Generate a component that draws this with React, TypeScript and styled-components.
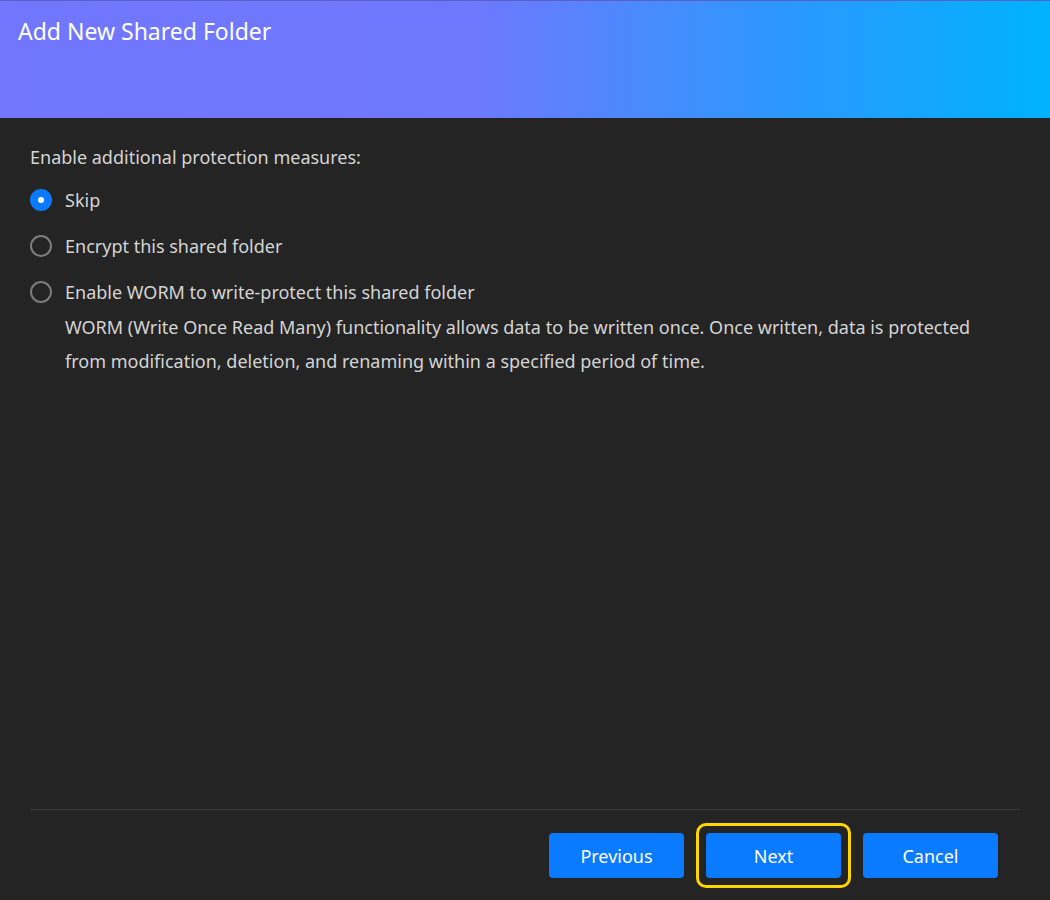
import styled, { createGlobalStyle } from "styled-components";

const GlobalStyle = createGlobalStyle`
  html, body {
    margin: 0;
    padding: 0;
    background: #242424;
  }
  * {
    box-sizing: border-box;
  }
`;

const Dialog = styled.div`
  width: 1050px;
  height: 900px;
  display: flex;
  flex-direction: column;
  background: #242424;
  font-family: "Noto Sans", "Open Sans", sans-serif;
  color: #d4d4d4;
`;

const Header = styled.header`
  height: 118px;
  flex-shrink: 0;
  padding: 14px 18px;
  border-top: 1px solid #5a5fc8;
  background: linear-gradient(90deg, #7276ff 0%, #6e78ff 45%, #2b98ff 75%, #00b2ff 100%);

  h1 {
    margin: 0;
    font-size: 23px;
    line-height: 32px;
    font-weight: 400;
    color: #ffffff;
  }
`;

const Body = styled.main`
  flex: 1;
  padding: 25px 40px 0 30px;
`;

const Prompt = styled.p`
  margin: 0 0 15px;
  font-size: 18px;
  line-height: 28px;
`;

const OptionList = styled.div`
  display: flex;
  flex-direction: column;
  gap: 18px;
`;

const Option = styled.label`
  display: flex;
  align-items: flex-start;
  gap: 13px;
  cursor: pointer;
`;

const Radio = styled.span<{ checked?: boolean }>`
  width: 22px;
  height: 22px;
  margin-top: 3px;
  flex-shrink: 0;
  border-radius: 50%;
  display: flex;
  align-items: center;
  justify-content: center;
  background: ${(props) => (props.checked ? "#0a7bff" : "transparent")};
  border: ${(props) => (props.checked ? "none" : "2px solid #7c7c7c")};

  &::after {
    content: "";
    display: ${(props) => (props.checked ? "block" : "none")};
    width: 6px;
    height: 6px;
    border-radius: 50%;
    background: #ffffff;
  }
`;

const OptionText = styled.div`
  font-size: 18px;
  line-height: 28px;

  p {
    margin: 4px 0 0;
    line-height: 34px;
  }
`;

const Footer = styled.footer`
  height: 91px;
  margin: 0 30px;
  border-top: 1px solid #3a3a3a;
  display: flex;
  justify-content: flex-end;
  align-items: flex-start;
  padding: 23px 22px 0 0;
  gap: 22px;
`;

const ButtonWrap = styled.div<{ focused?: boolean }>`
  padding: 7px;
  margin: -10px;
  border-radius: 10px;
  border: 3px solid ${(props) => (props.focused ? "#ffd500" : "transparent")};
`;

const Button = styled.button`
  width: 135px;
  height: 45px;
  border: none;
  border-radius: 4px;
  background: #0a7aff;
  color: #ffffff;
  font-family: inherit;
  font-size: 18px;
  cursor: pointer;
`;

export default function App() {
  return (
    <>
      <GlobalStyle />
      <Dialog>
        <Header>
          <h1>Add New Shared Folder</h1>
        </Header>
        <Body>
          <Prompt>Enable additional protection measures:</Prompt>
          <OptionList>
            <Option>
              <Radio checked />
              <OptionText>Skip</OptionText>
            </Option>
            <Option>
              <Radio />
              <OptionText>Encrypt this shared folder</OptionText>
            </Option>
            <Option>
              <Radio />
              <OptionText>
                Enable WORM to write-protect this shared folder
                <p>
                  WORM (Write Once Read Many) functionality allows data to be written once. Once written, data is
                  protected from modification, deletion, and renaming within a specified period of time.
                </p>
              </OptionText>
            </Option>
          </OptionList>
        </Body>
        <Footer>
          <ButtonWrap>
            <Button>Previous</Button>
          </ButtonWrap>
          <ButtonWrap focused>
            <Button>Next</Button>
          </ButtonWrap>
          <ButtonWrap>
            <Button>Cancel</Button>
          </ButtonWrap>
        </Footer>
      </Dialog>
    </>
  );
}
